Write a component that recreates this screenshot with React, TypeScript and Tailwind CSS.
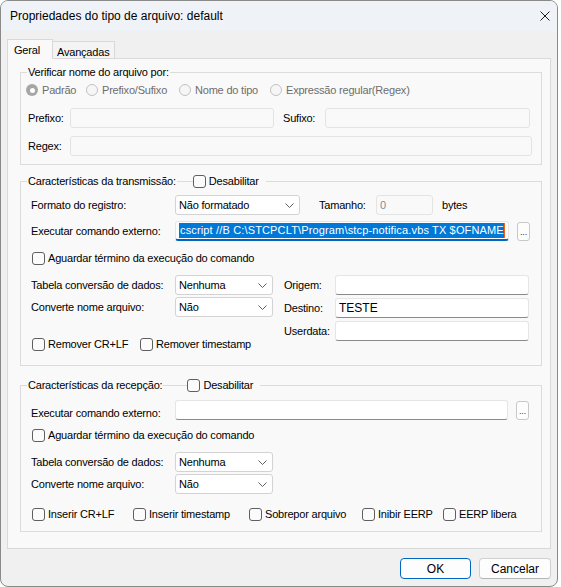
import React from 'react';

const Chevron = () => (
  <svg width="9" height="5" viewBox="0 0 9 5" fill="none">
    <path d="M0.5 0.5L4.5 4.5L8.5 0.5" stroke="#5f5f5f" strokeWidth="1" />
  </svg>
);

const Check: React.FC<{ label: string; className?: string }> = ({ label, className = '' }) => (
  <div className={`flex items-center h-[13px] ${className}`}>
    <span className="w-[13px] h-[13px] rounded-[3px] border border-[#5f5f5f] bg-[#fbfbfb] shrink-0" />
    <span className="ml-[3px] whitespace-nowrap">{label}</span>
  </div>
);

const Radio: React.FC<{ label: string; checked?: boolean; className?: string }> = ({ label, checked, className = '' }) => (
  <div className={`flex items-center text-[#6d6d6d] ${className}`}>
    {checked ? (
      <span className="w-[12px] h-[12px] rounded-full bg-[#a6a6a6] flex items-center justify-center shrink-0">
        <span className="w-[5px] h-[5px] rounded-full bg-white" />
      </span>
    ) : (
      <span className="w-[12px] h-[12px] rounded-full border border-[#c2c2c2] bg-[#f6f6f6] shrink-0" />
    )}
    <span className="ml-[4px] whitespace-nowrap">{label}</span>
  </div>
);

const Combo: React.FC<{ value: string; className?: string }> = ({ value, className = '' }) => (
  <div className={`h-[20px] rounded-[3px] border border-[#d3d3d3] bg-white flex items-center justify-between pl-[3px] pr-[5px] ${className}`}>
    <span>{value}</span>
    <Chevron />
  </div>
);

const Field: React.FC<{ className?: string; disabled?: boolean; children?: React.ReactNode }> = ({ className = '', disabled, children }) => (
  <div
    className={`h-[20px] rounded-[3px] border flex items-center pl-[3px] overflow-hidden whitespace-nowrap ${
      disabled ? 'border-[#e3e3e3] bg-[#f9f9f9]' : 'border-[#e5e5e5] border-b-[#8a8a8a] bg-white'
    } ${className}`}
  >
    {children}
  </div>
);

const Browse = () => (
  <div className="ml-[8px] w-[13px] h-[19px] rounded-[3px] border border-[#c8c8c8] bg-[#fdfdfd] flex items-end justify-center pb-[3px] text-[9px] leading-none text-[#3a2a70]">
    ...
  </div>
);

const Legend: React.FC<{ title: string; toggle?: boolean; gap?: string }> = ({ title, toggle, gap = 'w-[15px]' }) => (
  <legend className="ml-[6px] h-[14px] leading-[14px]">
    <div className="flex items-center h-[14px]">
      <span className="px-[1px]">{title}</span>
      {toggle && (
        <>
          <span className={`${gap} h-px bg-[#dcdcdc]`} />
          <span className="w-[13px] h-[13px] rounded-[3px] border border-[#5f5f5f] bg-[#fbfbfb]" />
          <span className="ml-[3px] pr-[7px]">Desabilitar</span>
        </>
      )}
    </div>
  </legend>
);

export default function App() {
  return (
    <div className="w-[561px] h-[587px] bg-white font-['Liberation_Sans',Arial,sans-serif] text-[11px] tracking-[-0.2px] text-black">
      <div className="w-[558px] h-[587px] rounded-[8px] border border-[#8a8a8a] bg-[#f0f0f0] overflow-hidden flex flex-col">
        {/* title bar */}
        <div className="h-[30px] bg-[#eff3f8] flex items-center justify-between pl-[9px] pr-[7px] shrink-0">
          <span className="text-[12px] tracking-normal">Propriedades do tipo de arquivo: default</span>
          <svg width="10" height="10" viewBox="0 0 10 10">
            <path d="M0.5 0.5L9.5 9.5M9.5 0.5L0.5 9.5" stroke="#1b1b1b" strokeWidth="1" />
          </svg>
        </div>

        <div className="px-[6px] pt-[8px]">
          {/* tabs */}
          <div className="flex items-end h-[19px]">
            <div className="relative z-10 -mb-px w-[46px] h-[20px] border border-b-0 border-[#d9d9d9] bg-[#f9f9f9] pl-[6px] pt-[2px]">
              Geral
            </div>
            <div className="w-[62px] h-[17px] border border-b-0 border-l-0 border-[#d9d9d9] bg-[#f4f4f4] pl-[4px] pt-[2px]">
              Avançadas
            </div>
          </div>

          <div className="w-[544px] h-[491px] border border-[#d9d9d9] bg-[#f9f9f9] pl-[12px] pt-[6px]">
            {/* file name check */}
            <fieldset className="w-[522px] border border-[#dcdcdc] pb-[8px]">
              <Legend title="Verificar nome do arquivo por:" />
              <div className="mt-[4px] h-[14px] flex items-center pl-[5px]">
                <Radio label="Padrão" checked className="w-[60px]" />
                <Radio label="Prefixo/Sufixo" className="w-[93px]" />
                <Radio label="Nome do tipo" className="w-[91px]" />
                <Radio label="Expressão regular(Regex)" />
              </div>
              <div className="mt-[11px] flex items-center pl-[7px]">
                <span className="w-[42px]">Prefixo:</span>
                <Field disabled className="w-[204px]" />
                <span className="ml-[9px] w-[42px]">Sufixo:</span>
                <Field disabled className="w-[205px]" />
              </div>
              <div className="mt-[8px] flex items-center pl-[7px]">
                <span className="w-[42px]">Regex:</span>
                <Field disabled className="w-[462px]" />
              </div>
            </fieldset>

            {/* sending */}
            <fieldset className="mt-[9px] w-[522px] border border-[#dcdcdc] pb-[14px]">
              <Legend title="Características da transmissão:" toggle gap="w-[16px]" />
              <div className="pl-[10px]">
                <div className="mt-[7px] flex items-center">
                  <span className="w-[144px]">Formato do registro:</span>
                  <Combo value="Não formatado" className="w-[125px]" />
                  <span className="ml-[19px] w-[57px]">Tamanho:</span>
                  <Field disabled className="w-[57px] text-[#7b8ea3]">0</Field>
                  <span className="ml-[9px]">bytes</span>
                </div>
                <div className="mt-[6px] flex items-center">
                  <span className="w-[144px]">Executar comando externo:</span>
                  <Field className="w-[334px] border-b-2 border-b-[#0067c0] pl-[1px]">
                    <span className="bg-[#0078d7] text-white leading-[15px] pl-[1px] tracking-[0.15px]">
                      cscript //B C:\STCPCLT\Program\stcp-notifica.vbs TX $OFNAME
                    </span>
                    <span className="w-[1px] h-[15px] bg-[#f7630c] shrink-0" />
                  </Field>
                  <Browse />
                </div>
                <Check label="Aguardar término da execução do comando" className="mt-[11px] ml-[1px]" />
                <div className="mt-[10px] flex">
                  <div className="w-[253px] flex flex-col">
                    <div className="flex items-center">
                      <span className="w-[144px]">Tabela conversão de dados:</span>
                      <Combo value="Nenhuma" className="w-[98px]" />
                    </div>
                    <div className="mt-[2px] flex items-center">
                      <span className="w-[144px]">Converte nome arquivo:</span>
                      <Combo value="Não" className="w-[98px]" />
                    </div>
                    <div className="mt-[21px] flex ml-[1px]">
                      <Check label="Remover CR+LF" className="w-[108px]" />
                      <Check label="Remover timestamp" />
                    </div>
                  </div>
                  <div className="flex flex-col gap-[3px]">
                    {['Origem:', 'Destino:', 'Userdata:'].map((l) => (
                      <div key={l} className="flex items-center">
                        <span className="w-[51px]">{l}</span>
                        <Field className="w-[194px] text-[12px] tracking-normal">{l === 'Destino:' ? 'TESTE' : ''}</Field>
                      </div>
                    ))}
                  </div>
                </div>
              </div>
            </fieldset>

            {/* receiving */}
            <fieldset className="mt-[12px] w-[522px] border border-[#dcdcdc] pb-[10px]">
              <Legend title="Características da recepção:" toggle gap="w-[24px]" />
              <div className="pl-[10px]">
                <div className="mt-[8px] flex items-center">
                  <span className="w-[144px] translate-y-[3px]">Executar comando externo:</span>
                  <Field className="w-[333px]" />
                  <Browse />
                </div>
                <Check label="Aguardar término da execução do comando" className="mt-[9px] ml-[1px]" />
                <div className="mt-[10px] flex items-center">
                  <span className="w-[144px]">Tabela conversão de dados:</span>
                  <Combo value="Nenhuma" className="w-[98px]" />
                </div>
                <div className="mt-[2px] flex items-center">
                  <span className="w-[144px]">Converte nome arquivo:</span>
                  <Combo value="Não" className="w-[98px]" />
                </div>
                <div className="mt-[14px] flex ml-[1px]">
                  <Check label="Inserir CR+LF" className="w-[101px]" />
                  <Check label="Inserir timestamp" className="w-[116px]" />
                  <Check label="Sobrepor arquivo" className="w-[113px]" />
                  <Check label="Inibir EERP" className="w-[81px]" />
                  <Check label="EERP libera" />
                </div>
              </div>
            </fieldset>
          </div>

          {/* dialog buttons */}
          <div className="mt-[9px] pl-[393px] flex gap-[8px]">
            <button className="w-[72px] h-[21px] rounded-[4px] border border-[#0067c0] bg-[#fdfdfd] text-[12px] tracking-normal">OK</button>
            <button className="w-[73px] h-[21px] rounded-[4px] border border-[#d0d0d0] border-b-[#b5b5b5] bg-[#fdfdfd] text-[12px] tracking-normal">Cancelar</button>
          </div>
        </div>
      </div>
    </div>
  );
}
